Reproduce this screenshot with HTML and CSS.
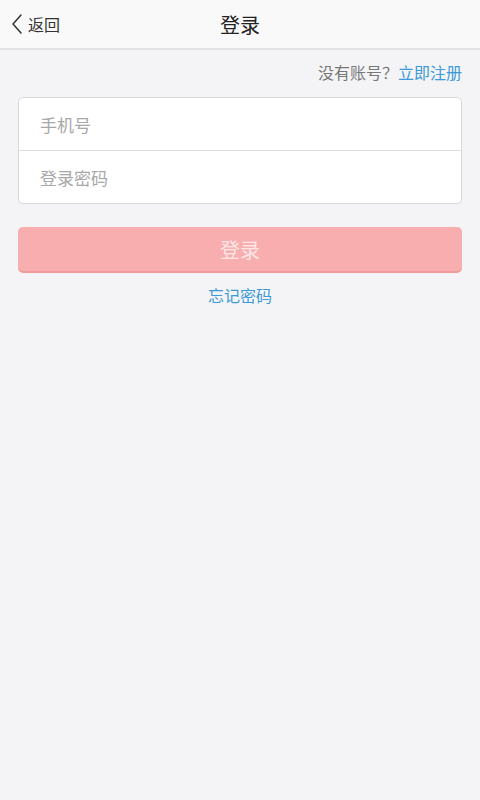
FILE: index.html
```html
<!DOCTYPE html>
<html lang="zh-CN">
<head>
    <title>登录</title>
    <meta charset="UTF-8">
    <meta name="viewport" content="width=device-width, initial-scale=1.0">
    <link rel="stylesheet" href="styles.css">
</head>

<body>
    <header class="topbar">
        <a class="back" href="#">
            <svg class="back-icon" width="12" height="20" viewBox="0 0 12 20">
                <path d="M10 1 L2 10 L10 19" fill="none" stroke="#333" stroke-width="1.5" stroke-linecap="round" stroke-linejoin="round"/>
            </svg>
            <span>返回</span>
        </a>
        <h1>登录</h1>
    </header>

    <main>
        <p class="signup">没有账号？<a href="#">立即注册</a></p>

        <form class="card">
            <div class="row"><input type="text" placeholder="手机号"></div>
            <div class="row"><input type="password" placeholder="登录密码"></div>
        </form>

        <button class="login" disabled>登录</button>

        <p class="forgot"><a href="#">忘记密码</a></p>
    </main>
</body>
</html>
```

FILE: styles.css
```css
html {
    font-family: "Noto Sans CJK SC", "Noto Sans", sans-serif;
}

body {
    margin: 0;
    min-height: 800px;
    background-color: #f4f4f7;
}

a {
    text-decoration: none;
}

.topbar {
    position: relative;
    height: 48px;
    background-color: #f9f9f9;
    border-bottom: 2px solid #e2e2e5;
    display: flex;
    align-items: center;
    justify-content: center;
}

.topbar h1 {
    margin: 0;
    font-size: 20px;
    font-weight: normal;
    color: #222;
}

.back {
    position: absolute;
    left: 11px;
    top: 12px;
    display: flex;
    align-items: center;
    gap: 5px;
    color: #333;
    font-size: 16px;
}

.back-icon {
    display: block;
}

main {
    padding: 0 18px;
}

.signup {
    margin: 0;
    padding: 10px 0 13px;
    text-align: right;
    font-size: 16px;
    line-height: 24px;
    color: #777;
}

.signup a {
    color: #3c9ad6;
}

.card {
    margin: 0;
    background-color: #fff;
    border: 1px solid #d8d8dc;
    border-radius: 5px;
}

.row {
    height: 52px;
    display: flex;
    align-items: center;
}

.row + .row {
    border-top: 1px solid #dcdce0;
}

.row input {
    border: none;
    outline: none;
    background: transparent;
    width: 100%;
    padding: 0 21px;
    font-family: inherit;
    font-size: 17px;
    color: #333;
}

.row input::placeholder {
    color: #a8a8a8;
}

.login {
    display: block;
    width: 100%;
    height: 46px;
    margin-top: 23px;
    border: none;
    border-bottom: 2px solid #f09a9a;
    border-radius: 5px;
    background-color: #f8aeae;
    color: #fde6e6;
    font-family: inherit;
    font-size: 20px;
}

.forgot {
    margin: 10px 0 0;
    text-align: center;
    font-size: 16px;
}

.forgot a {
    color: #3c9ad6;
}
```
